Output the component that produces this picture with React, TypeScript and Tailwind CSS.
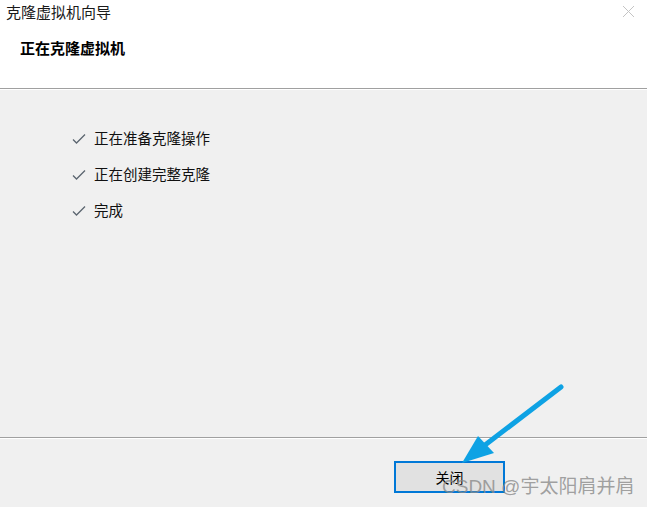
export default function App() {
  const steps = ['正在准备克隆操作', '正在创建完整克隆', '完成']

  return (
    <div
      className="relative w-[647px] h-[507px] flex flex-col overflow-hidden bg-[#f0f0f0] text-black"
      style={{ fontFamily: '"Noto Sans CJK SC", "Noto Sans", sans-serif' }}
    >
      <div className="h-[88px] bg-white flex flex-col">
        <div className="flex items-start justify-between">
          <div className="pl-[6px] pt-[1px] text-[15px] leading-[22px] text-[#1a1a1a]">克隆虚拟机向导</div>
          <svg width="13" height="13" viewBox="0 0 13 13" className="mt-[5px] mr-[12px]">
            <path d="M1 1L12 12M12 1L1 12" stroke="#c4c4c4" strokeWidth="1" />
          </svg>
        </div>
        <div className="pl-[20px] pt-[15px] text-[15px] leading-[20px] font-bold">正在克隆虚拟机</div>
      </div>
      <div className="h-px bg-[#a0a0a0]" />
      <div className="h-px bg-white" />

      <div className="flex-1 flex flex-col gap-[15px] pl-[72px] pt-[37px]">
        {steps.map((s) => (
          <div key={s} className="flex items-center h-[21px]">
            <svg width="14" height="12" viewBox="0 0 14 12" className="mr-[8px] mt-[3px]">
              <path d="M1 6.5L4.5 10L13 1.5" fill="none" stroke="#5c6670" strokeWidth="1.3" />
            </svg>
            <span className="text-[14.5px] leading-[21px] text-[#111]">{s}</span>
          </div>
        ))}
      </div>

      <div className="h-px bg-[#a0a0a0]" />
      <div className="h-px bg-white" />
      <div className="h-[68px] flex items-start justify-end pr-[142px] pt-[22px]">
        <button className="w-[111px] h-[32px] border-2 border-[#0078d7] bg-[#e1e1e1] text-[14px] text-black">
          关闭
        </button>
      </div>

      <svg width="647" height="507" className="absolute inset-0 pointer-events-none">
        <line x1="561" y1="387" x2="472" y2="455" stroke="#0ea2e4" strokeWidth="5" strokeLinecap="round" />
        <polygon points="462,463 478,436 494,453" fill="#0ea2e4" />
      </svg>

      <div
        className="absolute left-[442px] top-[475px] text-[19px] leading-[24px] text-[#8a8a8a]/80 pointer-events-none whitespace-nowrap"
        style={{ fontFamily: '"Liberation Sans", "Noto Sans CJK SC", sans-serif' }}
      >
        CSDN @宇太阳肩并肩
      </div>
    </div>
  )
}
